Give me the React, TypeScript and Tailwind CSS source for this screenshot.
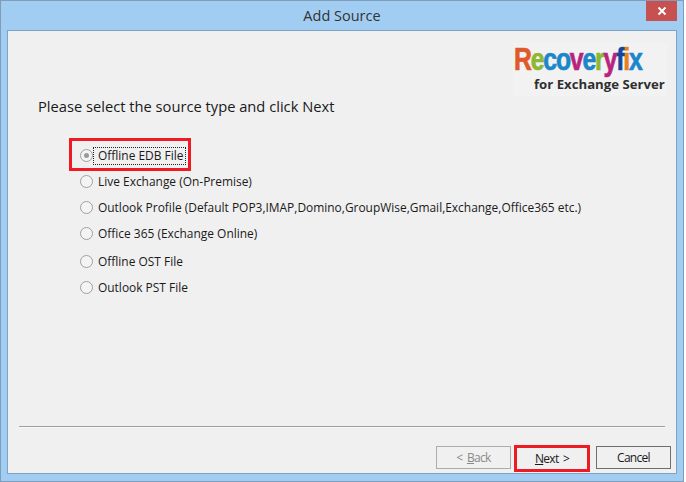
const options = [
    { label: 'Offline EDB File', top: 'mt-0', selected: true },
    { label: 'Live Exchange (On-Premise)', top: 'mt-[10px]' },
    { label: 'Outlook Profile (Default POP3,IMAP,Domino,GroupWise,Gmail,Exchange,Office365 etc.)', top: 'mt-[10px]' },
    { label: 'Office 365 (Exchange Online)', top: 'mt-[10px]' },
    { label: 'Offline OST File', top: 'mt-[12px]' },
    { label: 'Outlook PST File', top: 'mt-[10px]' },
]

const logoLetters = [
    { ch: 'R', color: 'text-[#e0592a]' },
    { ch: 'e', color: 'text-[#8cb832]' },
    { ch: 'c', color: 'text-[#1b87c9]' },
    { ch: 'o', color: 'text-[#1b87c9]' },
    { ch: 'v', color: 'text-[#b9237f]' },
    { ch: 'e', color: 'text-[#1b87c9]' },
    { ch: 'r', color: 'text-[#8cb832]' },
    { ch: 'y', color: 'text-[#b9237f]' },
    { ch: 'f', color: 'text-[#14479b]' },
    { ch: 'i', color: 'text-[#ea7f22]' },
    { ch: 'x', color: 'text-[#1b87c9]' },
]

function Radio({ selected }: { selected?: boolean }) {
    return (
        <span className="w-[13px] h-[13px] mb-[2px] rounded-full border border-[#a0a0a0] bg-[#f4f4f4] flex items-center justify-center shrink-0">
            {selected && <span className="w-[5px] h-[5px] rounded-full bg-[#9a9a9a]" />}
        </span>
    )
}

function Logo() {
    return (
        <div className="w-[154px] h-[53px] bg-[#f2f2f2] flex flex-col">
            <div className="h-[33px] ml-[1px] font-['Liberation_Sans',sans-serif] font-bold text-[31px] leading-[33px] tracking-[-1.5px] whitespace-nowrap origin-left scale-x-[0.8] [-webkit-text-stroke:0.7px_currentColor]">
                {logoLetters.map((l, i) => (
                    <span key={i} className={l.color}>{l.ch}</span>
                ))}
            </div>
            <div className="ml-[21px] font-['Open_Sans',sans-serif] font-bold text-[13.2px] leading-[16px] text-[#2f2f2f] whitespace-nowrap">
                for Exchange Server
            </div>
        </div>
    )
}

export default function App() {
    return (
        <div className="w-[686px] h-[482px] bg-white font-['Open_Sans',sans-serif]">
            <div className="w-[684px] h-[482px] bg-[#a1cdf2] border border-[#7f9db9] flex flex-col">
                <div className="h-[29px] flex items-start justify-center relative shrink-0">
                    <span className="text-[14.5px] leading-[30px] text-[#333333]">Add Source</span>
                    <div className="absolute right-[6px] top-0 w-[31px] h-[20px] bg-[#c75050] flex items-center justify-center">
                        <svg width="10" height="10" viewBox="0 0 10 10">
                            <path d="M1.5 1.5 L8.5 8.5 M8.5 1.5 L1.5 8.5" stroke="#ffffff" strokeWidth="2" />
                        </svg>
                    </div>
                </div>
                <div className="mx-[6px] h-[444px] bg-[#f0f0f0] border border-[#7fa3c7] flex flex-col relative">
                    <div className="flex justify-end pt-[12px] pr-[9px]">
                        <Logo />
                    </div>
                    <p className="ml-[30px] text-[14.7px] leading-[20px] text-[#1a1a1a] whitespace-nowrap">
                        Please select the source type and click Next
                    </p>
                    <div className="ml-[72px] mt-[32px] flex flex-col">
                        {options.map((o) => (
                            <div key={o.label} className={`flex items-center gap-[1px] h-[16px] ${o.top}`}>
                                <Radio selected={o.selected} />
                                <span className={`text-[11.95px] leading-[16px] text-[#1a1a1a] whitespace-nowrap pl-[4px] pr-[2px] ${o.selected ? 'outline-1 outline-dotted outline-[#222222]' : ''}`}>
                                    {o.label}
                                </span>
                            </div>
                        ))}
                    </div>
                    {/* red highlight round the first option */}
                    <div className="absolute left-[61px] top-[107px] w-[122px] h-[33px] border-[3px] border-[#ed1c24]" />
                    <div className="mt-auto mx-[11px] h-[2px] bg-[#f8f8f8] border-t border-[#a0a0a0]" />
                    <div className="h-[45px] flex items-start justify-end pt-[18px] pr-[5px] shrink-0 text-[12px] tracking-[-0.7px] [word-spacing:2px]">
                        <div className="w-[75px] h-[23px] border border-[#adadad] flex items-center justify-center text-[#8a8a8a]">
                            <span>&lt; <span className="underline">B</span>ack</span>
                        </div>
                        <div className="ml-[3px] mt-[-1px] w-[76px] h-[27px] flex items-center justify-center text-[#1a1a1a] border-[3px] border-[#ed1c24]">
                            <span>
                                <span className="underline">N</span>ext &gt;
                            </span>
                        </div>
                        <div className="ml-[6px] w-[75px] h-[23px] border border-[#6e6e6e] flex items-center justify-center text-[#1a1a1a]">
                            Cancel
                        </div>
                    </div>
                </div>
            </div>
        </div>
    )
}
